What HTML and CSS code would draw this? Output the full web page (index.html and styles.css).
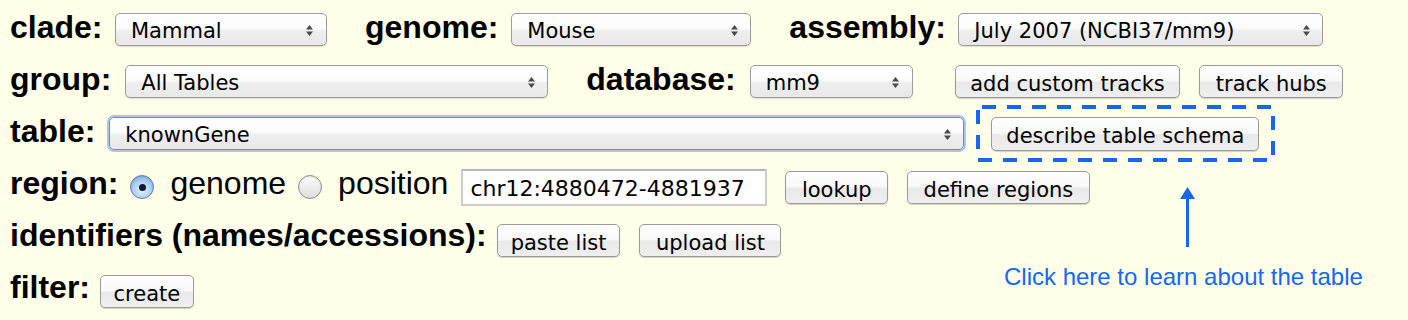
FILE: index.html
```html
<!DOCTYPE html>
<html lang="en">
<head>
<meta charset="utf-8">
<title>Table Browser</title>
<link rel="stylesheet" href="styles.css">
</head>
<body>
<div class="page">
  <div class="row row-1">
    <span class="label">clade:</span>
    <div class="select w-clade"><span>Mammal</span><svg class="arrows" width="7" height="11" viewBox="0 0 7 11"><path d="M0 4.5L3.5 0L7 4.5ZM0 6.5L3.5 11L7 6.5Z" fill="#4a4a4a"/></svg></div>
    <span class="label spaced">genome:</span>
    <div class="select w-genome"><span>Mouse</span><svg class="arrows" width="7" height="11" viewBox="0 0 7 11"><path d="M0 4.5L3.5 0L7 4.5ZM0 6.5L3.5 11L7 6.5Z" fill="#4a4a4a"/></svg></div>
    <span class="label spaced">assembly:</span>
    <div class="select w-assembly"><span>July 2007 (NCBI37/mm9)</span><svg class="arrows" width="7" height="11" viewBox="0 0 7 11"><path d="M0 4.5L3.5 0L7 4.5ZM0 6.5L3.5 11L7 6.5Z" fill="#4a4a4a"/></svg></div>
  </div>

  <div class="row row-2">
    <span class="label">group:</span>
    <div class="select w-group"><span>All Tables</span><svg class="arrows" width="7" height="11" viewBox="0 0 7 11"><path d="M0 4.5L3.5 0L7 4.5ZM0 6.5L3.5 11L7 6.5Z" fill="#4a4a4a"/></svg></div>
    <span class="label spaced">database:</span>
    <div class="select w-db"><span>mm9</span><svg class="arrows" width="7" height="11" viewBox="0 0 7 11"><path d="M0 4.5L3.5 0L7 4.5ZM0 6.5L3.5 11L7 6.5Z" fill="#4a4a4a"/></svg></div>
    <button class="btn btn-mid gap-43">add custom tracks</button>
    <button class="btn gap-19">track hubs</button>
  </div>

  <div class="row row-3">
    <span class="label">table:</span>
    <div class="select select-focus w-table"><span>knownGene</span><svg class="arrows" width="7" height="11" viewBox="0 0 7 11"><path d="M0 4.5L3.5 0L7 4.5ZM0 6.5L3.5 11L7 6.5Z" fill="#4a4a4a"/></svg></div>
    <div class="schema">
      <svg class="dash" width="299" height="57" viewBox="0 0 299 57"><rect x="2" y="2" width="295" height="53" fill="none" stroke="#1766f0" stroke-width="4" stroke-dasharray="14 11" stroke-dashoffset="21"/></svg>
      <button class="btn btn-tight">describe table schema</button>
    </div>
  </div>

  <div class="row row-4">
    <span class="label">region:</span>
    <span class="radio on"></span>
    <span class="opt">genome</span>
    <span class="radio"></span>
    <span class="opt">position</span>
    <div class="input">chr12:4880472-4881937</div>
    <button class="btn gap-18">lookup</button>
    <button class="btn gap-19">define regions</button>
  </div>

  <div class="row row-5">
    <span class="label">identifiers (names/accessions):</span>
    <button class="btn btn-paste gap-10">paste list</button>
    <button class="btn gap-19">upload list</button>
  </div>

  <div class="row row-6">
    <span class="label">filter:</span>
    <button class="btn gap-10 btn-narrow">create</button>
  </div>

  <svg class="callout-arrow" width="17" height="62" viewBox="0 0 17 62"><path d="M1 13L8.5 1L16 13Z" fill="#1766f0"/><rect x="7" y="12" width="3" height="49" fill="#1766f0"/></svg>
  <div class="callout-text">Click here to learn about the table</div>
</div>
</body>
</html>
```
FILE: styles.css
```css
* { box-sizing: border-box; }

body {
  margin: 0;
  background: #fffee8;
  color: #000;
  font-family: "Liberation Sans", Arial, sans-serif;
}

.page {
  position: relative;
  height: 320px;
  padding: 3.5px 0 0 10px;
  overflow: hidden;
}

.row {
  display: flex;
  align-items: center;
  height: 52px;
}
.row-4 { height: 55px; }
.row-5, .row-6 { height: 51px; }

.label {
  font-size: 32px;
  font-weight: bold;
  line-height: 32px;
  margin-bottom: 5px;
  white-space: nowrap;
}
.label.spaced { margin-left: 38px; }
.row-4 .label, .row-4 .opt { margin-bottom: 9px; }
.row-5 .label { margin-bottom: 11px; }
.row-6 .label { margin-bottom: 9px; }

.opt {
  font-size: 32px;
  line-height: 32px;
  margin-left: 16px;
  white-space: nowrap;
}

/* Aqua style pop-up menus */
.select {
  display: flex;
  align-items: center;
  justify-content: space-between;
  flex: none;
  height: 33px;
  margin-left: 12.5px;
  padding: 2px 12.5px 0 15px;
  border: 1px solid #9c9c9c;
  border-radius: 5px;
  background: linear-gradient(#ffffff 0%, #fcfcfc 45%, #eeeeee 55%, #e9e9e9 100%);
  box-shadow: 0 1px 1px rgba(0, 0, 0, 0.13);
  font-family: "DejaVu Sans", sans-serif;
  font-size: 21px;
  line-height: 24px;
  white-space: nowrap;
}
.select .arrows { flex: none; }
.select-focus {
  border-color: #5d8fd1;
  box-shadow: 0 0 0 2px #a8c6ee;
  margin-left: 14px;
}

.w-clade { width: 212px; }
.w-genome { width: 240px; margin-left: 13px; }
.w-assembly { width: 365px; }
.w-group { width: 423px; margin-left: 14px; }
.w-db { width: 163px; margin-left: 14px; }
.w-table { width: 855px; }

/* Aqua push buttons */
.btn {
  flex: none;
  height: 33px;
  margin: 0;
  padding: 5px 15.5px 0;
  border: 1px solid #9a9a9a;
  border-radius: 5px;
  background: linear-gradient(#ffffff 0%, #f8f8f8 48%, #e9e9e9 52%, #efefef 100%);
  box-shadow: 0 1px 1px rgba(0, 0, 0, 0.18);
  color: #000;
  font-family: "DejaVu Sans", sans-serif;
  font-size: 21px;
  line-height: 24px;
  white-space: nowrap;
}
.btn-mid { padding-left: 14.5px; padding-right: 14.5px; }
.btn-tight { padding-left: 14px; padding-right: 14px; }
.btn-paste { padding-left: 13px; padding-right: 13px; }
.btn-narrow { padding-left: 12.5px; padding-right: 12.5px; }
.gap-43 { margin-left: 42px; }
.gap-19 { margin-left: 19px; }
.gap-18 { margin-left: 18px; }
.gap-10 { margin-left: 10px; }

/* annotated schema button */
.schema {
  position: relative;
  flex: none;
  width: 299px;
  height: 57px;
  margin-left: 12px;
  padding: 11.5px 0 0 15px;
}
.schema .dash {
  position: absolute;
  left: 0;
  top: 0;
}
.schema .btn { position: relative; height: 34px; }

/* radio buttons */
.radio {
  position: relative;
  flex: none;
  width: 24px;
  height: 24px;
  margin-left: 12px;
  border-radius: 50%;
  border: 1px solid #8e8e8e;
  background: linear-gradient(#fdfdfd, #dcdcdc);
  box-shadow: inset 0 1px 2px rgba(0, 0, 0, 0.12);
}
.radio.on {
  border-color: #5b7fae;
  background: radial-gradient(circle at 50% 65%, #e3f0fd 0%, #b2d3f5 45%, #6fa6e3 100%);
}
.radio.on::after {
  content: "";
  position: absolute;
  left: 50%;
  top: 50%;
  width: 7px;
  height: 7px;
  margin: -3.5px 0 0 -3.5px;
  border-radius: 50%;
  background: #0f1c30;
}

/* text field */
.input {
  flex: none;
  width: 306px;
  height: 37px;
  margin-left: 13px;
  padding: 5px 0 0 7px;
  border: 2px solid #cdcdcd;
  border-top-color: #b8b8b8;
  background: #fff;
  font-family: "DejaVu Sans", sans-serif;
  font-size: 22px;
  line-height: 25px;
  white-space: nowrap;
}

/* annotation */
.callout-arrow {
  position: absolute;
  left: 1179px;
  top: 186px;
}
.callout-text {
  position: absolute;
  left: 1004px;
  top: 265px;
  color: #1568f2;
  font-size: 24px;
  line-height: 24px;
  white-space: nowrap;
}
```
